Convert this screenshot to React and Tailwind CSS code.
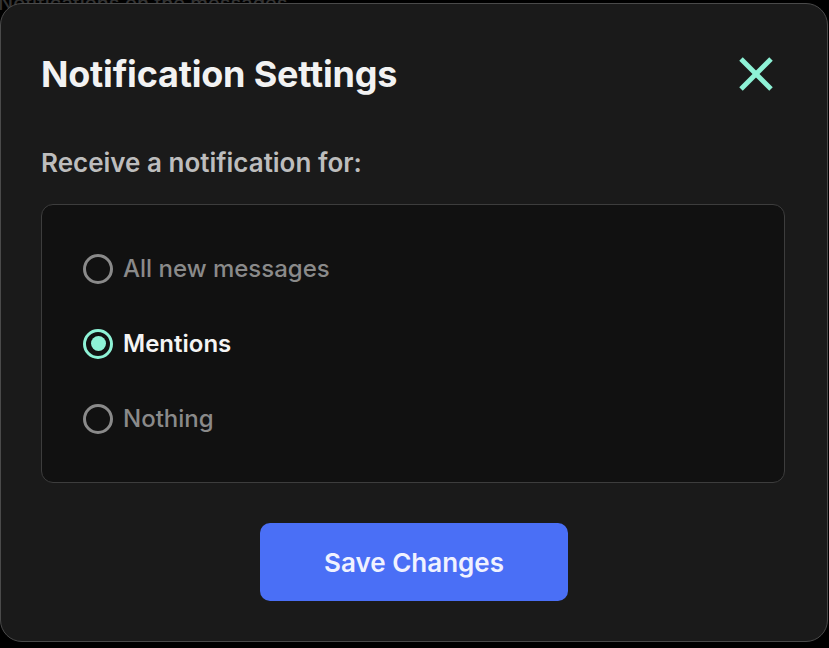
import React from "react";

function Radio({ label, checked }) {
  return (
    <label className="flex h-[75px] items-center gap-[10px]">
      <span
        className={
          "flex h-[30px] w-[30px] items-center justify-center rounded-full border-[3px] " +
          (checked ? "border-[#8ef2d6]" : "border-[#8a8a8a]")
        }
      >
        {checked && <span className="h-[15px] w-[15px] rounded-full bg-[#8ef2d6]" />}
      </span>
      <span
        className={
          "text-[24px] leading-[30px] " +
          (checked ? "font-semibold text-[#f4f4f4]" : "font-medium text-[#8a8a8a]")
        }
      >
        {label}
      </span>
    </label>
  );
}

export default function App() {
  return (
    <div
      className="relative h-[648px] w-[829px] overflow-hidden bg-black"
      style={{ fontFamily: "Inter, 'Noto Sans', sans-serif" }}
    >
      <div className="absolute left-[-2px] top-[-12px] text-[20px] font-medium text-[#333333]">
        Notifications on the messages
      </div>
      <div className="absolute left-0 top-[3px] flex h-[639px] w-[828px] flex-col rounded-[22px] border border-[#4a4a4a] bg-[#1a1a1a] pl-[40px] pr-[42px] pt-[48px]">
        <div className="flex items-center justify-between">
          <h1 className="text-[36px] font-bold leading-[44px] tracking-[-0.2px] text-[#f2f2f2]">
            Notification Settings
          </h1>
          <button className="mr-[12px] flex h-[34px] w-[34px] items-center justify-center">
            <svg width="34" height="34" viewBox="0 0 34 34">
              <line x1="2" y1="2" x2="32" y2="32" stroke="#8ef2d6" strokeWidth="5" />
              <line x1="32" y1="2" x2="2" y2="32" stroke="#8ef2d6" strokeWidth="5" />
            </svg>
          </button>
        </div>
        <p className="mt-[52px] text-[26px] font-semibold leading-[30px] text-[#bdbdbd]">
          Receive a notification for:
        </p>
        <div className="mt-[26px] flex flex-col rounded-[12px] border border-[#3d3d3d] bg-[#111111] py-[26px] pl-[41px]">
          <Radio label="All new messages" />
          <Radio label="Mentions" checked />
          <Radio label="Nothing" />
        </div>
        <div className="mt-[40px] flex justify-center pl-[2px]">
          <button className="h-[78px] w-[308px] rounded-[10px] bg-[#4a6ff6] text-[26px] font-semibold text-[#f0f2ff]">
            Save Changes
          </button>
        </div>
      </div>
    </div>
  );
}
